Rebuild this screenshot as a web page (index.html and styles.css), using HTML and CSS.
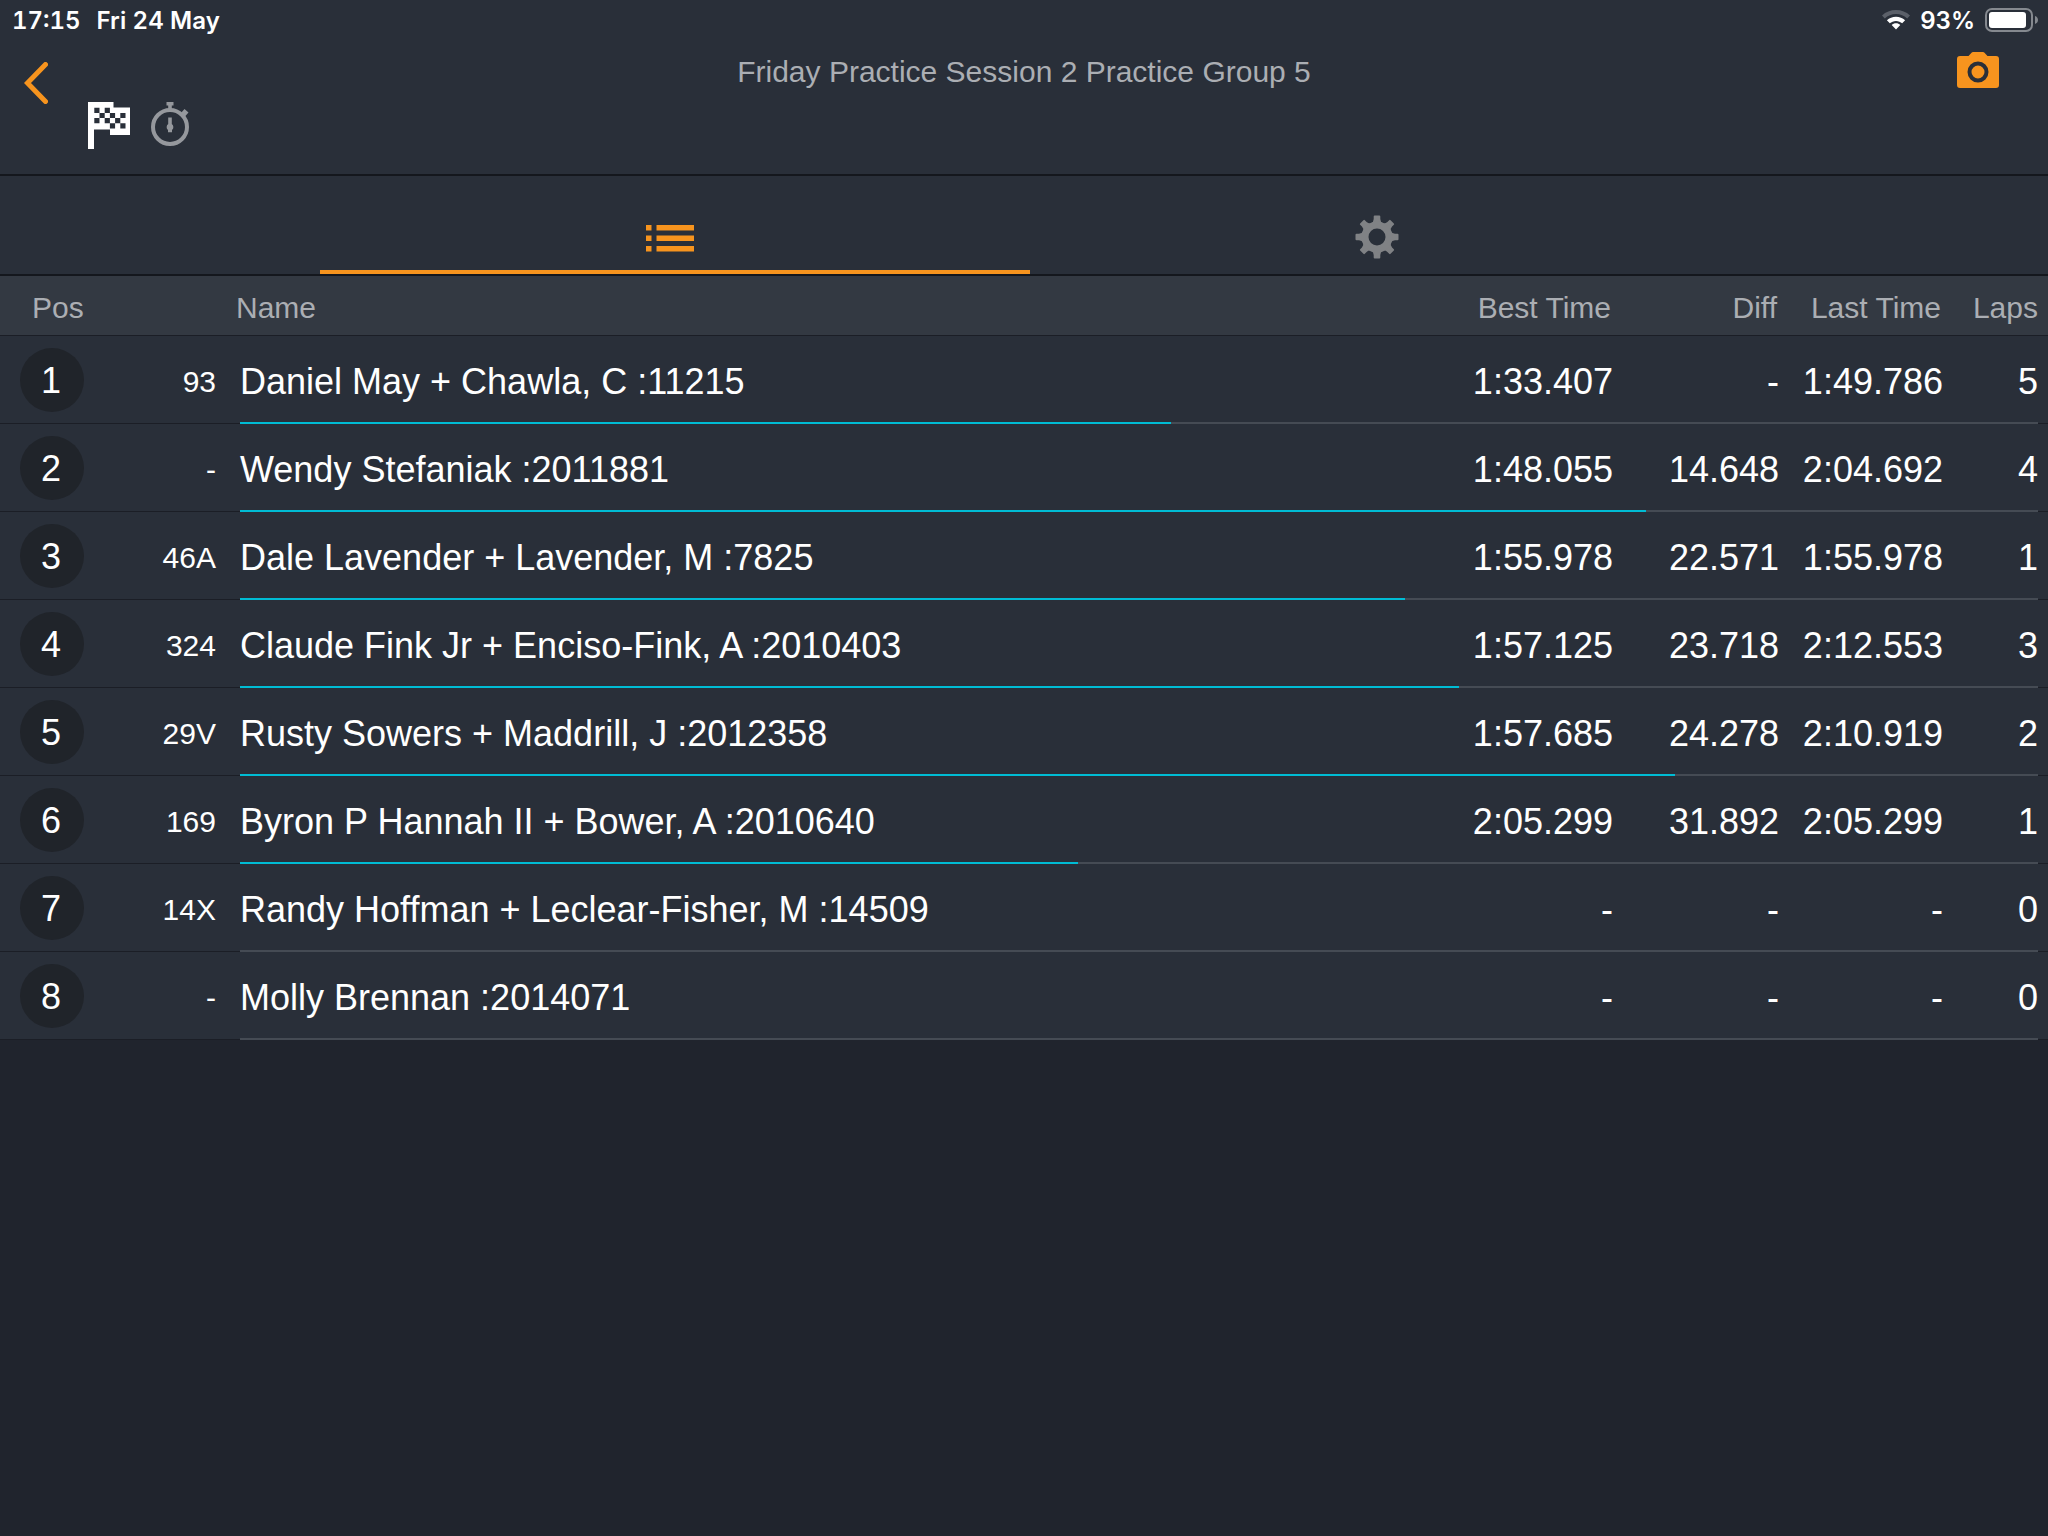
FILE: index.html
```html
<!DOCTYPE html>
<html lang="en">
<head>
<meta charset="UTF-8">
<meta name="viewport" content="width=device-width, initial-scale=1.0">
<title>Friday Practice Session 2 Practice Group 5</title>
<link rel="stylesheet" href="styles.css">
</head>
<body>

<div class="status-bar">
  <div class="status-left">
    <span>17:15</span>
    <span>Fri 24 May</span>
  </div>
  <div class="status-right">
    <svg class="wifi" viewBox="0 0 28 20" width="28" height="20">
      <path d="M14 0C8.600 0 3.700 2 0 5.400l2.800 3C5.800 5.700 9.700 4.100 14 4.100s8.200 1.600 11.200 4.300l2.800-3C24.300 2 19.400 0 14 0z" fill="#5b6069"/>
      <path d="M14 6.800c-3.500 0-6.700 1.300-9.100 3.500l2.900 3c1.600-1.500 3.800-2.400 6.200-2.400s4.600.9 6.200 2.400l2.900-3c-2.400-2.200-5.600-3.500-9.100-3.500z" fill="#fff"/>
      <path d="M14 13.200c-1.700 0-3.200.6-4.300 1.700L14 19.600l4.300-4.700c-1.100-1.100-2.600-1.700-4.300-1.700z" fill="#fff"/>
    </svg>
    <span>93%</span>
    <svg class="battery" viewBox="0 0 54 24" width="54" height="24">
      <rect x="1" y="1" width="46" height="22" rx="6" fill="none" stroke="#85898f" stroke-width="2"/>
      <rect x="4" y="4" width="37" height="16" rx="3" fill="#fff"/>
      <path d="M50 8c1.800.6 3 2.200 3 4s-1.200 3.400-3 4z" fill="#85898f"/>
    </svg>
  </div>
</div>

<header>
  <button class="back" aria-label="Back">
    <svg viewBox="0 0 24 42" width="24" height="42">
      <path d="M21.500 2.500L3.500 21l18 18.500" fill="none" stroke="#f7941e" stroke-width="5" stroke-linecap="round" stroke-linejoin="miter"/>
    </svg>
  </button>
  <div class="flags">
    <svg viewBox="0 0 42 47" width="42" height="47">
      <path d="M0 0h25.500v5.500H42V33H22v-5.500H6V47H0z" fill="#fff"/>
      <g fill="#292f39">
        <path d="M6.300 5.700h5.200v5.200H6.300zM16.700 5.700h5.200v5.200h-5.200zM11.500 10.900h5.200v5.200h-5.200zM21.900 10.900h5.200v5.200h-5.200zM32.300 10.900h5.200v5.200h-5.200zM6.300 16.100h5.200v5.200H6.300zM16.700 16.100h5.200v5.200h-5.200zM27.100 16.100h5.200v5.200h-5.200zM21.900 21.300h5.200v5.200h-5.200zM32.300 21.300h5.200v5.200h-5.200z"/>
      </g>
    </svg>
    <svg viewBox="0 0 38 44" width="38" height="44">
      <circle cx="19" cy="25" r="17" fill="none" stroke="#95989d" stroke-width="4"/>
      <path d="M15.500 0h7v3.500h-1.700V8h-3.600V3.500h-1.700zM29.500 11.500l4-4.500 4 3.400-3.800 4.400z" fill="#95989d"/>
      <path d="M17.200 15.500h3.600v6.600a3.800 3.800 0 0 1 .2 6v2.100h-4v-2.100a3.800 3.800 0 0 1 .2-6z" fill="#95989d"/>
    </svg>
  </div>
  <h1>Friday Practice Session 2 Practice Group 5</h1>
  <button class="camera" aria-label="Take picture">
    <svg viewBox="0 0 42 36" width="42" height="36">
      <path d="M3 4h8.500l3-3.200Q15.200 0 16 0h10q.8 0 1.500.8l3 3.200H39q3 0 3 3v26q0 3-3 3H3q-3 0-3-3V7q0-3 3-3z" fill="#f7941e"/>
      <circle cx="21" cy="20" r="8.500" fill="none" stroke="#292f39" stroke-width="4"/>
    </svg>
  </button>
</header>

<nav class="tabs">
  <button class="tab active" aria-label="Results">
    <svg viewBox="0 0 58 28" width="58" height="28">
      <path d="M0 0h5.500v5.500H0zM10.500 0H48v5.500H10.500zM0 10.500h5.500V16H0zM10.500 10.500H48V16H10.500zM0 21h5.500v5.500H0zM10.500 21H48v5.500H10.500z" fill="#f7941e"/>
    </svg>
  </button>
  <button class="tab" aria-label="Settings">
    <svg viewBox="-22 -22 48 44" width="48" height="44">
      <defs>
        <path id="tooth" d="M-5.500-14Q-3.500-15-3.300-18v-2.500q0-1 1-1h4.600q1 0 1 1v2.500q.2 3 2.200 4z"/>
      </defs>
      <g fill="#808285">
        <use href="#tooth"/>
        <use href="#tooth" transform="rotate(45)"/>
        <use href="#tooth" transform="rotate(90)"/>
        <use href="#tooth" transform="rotate(135)"/>
        <use href="#tooth" transform="rotate(180)"/>
        <use href="#tooth" transform="rotate(225)"/>
        <use href="#tooth" transform="rotate(270)"/>
        <use href="#tooth" transform="rotate(315)"/>
      </g>
      <circle r="12" fill="none" stroke="#808285" stroke-width="7"/>
    </svg>
  </button>
</nav>

<table class="results">
  <thead>
    <tr>
      <th class="pos">Pos</th>
      <th class="car"></th>
      <th class="name">Name</th>
      <th class="best">Best Time</th>
      <th class="diff">Diff</th>
      <th class="last">Last Time</th>
      <th class="laps">Laps</th>
    </tr>
  </thead>
  <tbody>
    <tr>
      <td class="pos"><span>1</span></td>
      <td class="car">93</td>
      <td class="name">Daniel May + Chawla, C :11215<div class="track"><div class="bar" style="width: 51.8%"></div></div></td>
      <td>1:33.407</td>
      <td>-</td>
      <td>1:49.786</td>
      <td class="laps">5</td>
    </tr>
    <tr>
      <td class="pos"><span>2</span></td>
      <td class="car">-</td>
      <td class="name">Wendy Stefaniak :2011881<div class="track"><div class="bar" style="width: 78.2%"></div></div></td>
      <td>1:48.055</td>
      <td>14.648</td>
      <td>2:04.692</td>
      <td class="laps">4</td>
    </tr>
    <tr>
      <td class="pos"><span>3</span></td>
      <td class="car">46A</td>
      <td class="name">Dale Lavender + Lavender, M :7825<div class="track"><div class="bar" style="width: 64.8%"></div></div></td>
      <td>1:55.978</td>
      <td>22.571</td>
      <td>1:55.978</td>
      <td class="laps">1</td>
    </tr>
    <tr>
      <td class="pos"><span>4</span></td>
      <td class="car">324</td>
      <td class="name">Claude Fink Jr + Enciso-Fink, A :2010403<div class="track"><div class="bar" style="width: 67.8%"></div></div></td>
      <td>1:57.125</td>
      <td>23.718</td>
      <td>2:12.553</td>
      <td class="laps">3</td>
    </tr>
    <tr>
      <td class="pos"><span>5</span></td>
      <td class="car">29V</td>
      <td class="name">Rusty Sowers + Maddrill, J :2012358<div class="track"><div class="bar" style="width: 79.8%"></div></div></td>
      <td>1:57.685</td>
      <td>24.278</td>
      <td>2:10.919</td>
      <td class="laps">2</td>
    </tr>
    <tr>
      <td class="pos"><span>6</span></td>
      <td class="car">169</td>
      <td class="name">Byron P Hannah II + Bower, A :2010640<div class="track"><div class="bar" style="width: 46.6%"></div></div></td>
      <td>2:05.299</td>
      <td>31.892</td>
      <td>2:05.299</td>
      <td class="laps">1</td>
    </tr>
    <tr>
      <td class="pos"><span>7</span></td>
      <td class="car">14X</td>
      <td class="name">Randy Hoffman + Leclear-Fisher, M :14509<div class="track"></div></td>
      <td>-</td>
      <td>-</td>
      <td>-</td>
      <td class="laps">0</td>
    </tr>
    <tr>
      <td class="pos"><span>8</span></td>
      <td class="car">-</td>
      <td class="name">Molly Brennan :2014071<div class="track"></div></td>
      <td>-</td>
      <td>-</td>
      <td>-</td>
      <td class="laps">0</td>
    </tr>
  </tbody>
</table>

</body>
</html>
```
FILE: styles.css
```css
* {
  box-sizing: border-box;
}
body {
  margin: 0;
  background-color: #20242d;
  color: #fff;
  font-family: "Helvetica Neue", "Liberation Sans", Arial, sans-serif;
}
button {
  border: 0;
  padding: 0;
  background: none;
  cursor: pointer;
}
svg {
  display: block;
}

/* Status bar */
.status-bar {
  display: flex;
  justify-content: space-between;
  align-items: center;
  height: 40px;
  padding: 0 9px 0 12px;
  background-color: #292f39;
  font-family: Inter, sans-serif;
  font-size: 24px;
  font-weight: 600;
}
.status-left {
  display: flex;
  gap: 16px;
  font-variant-numeric: tabular-nums;
}
.status-right {
  display: flex;
  align-items: center;
  gap: 10px;
}

/* Header */
header {
  display: grid;
  grid-template-columns: 88px 1fr auto 1fr 88px;
  align-items: start;
  height: 136px;
  border-bottom: 2px solid #14171d;
  background-color: #292f39;
}
.back {
  justify-self: start;
  margin: 22px 0 0 24px;
}
.flags {
  display: flex;
  gap: 21px;
  padding-top: 62px;
}
h1 {
  margin: 12px 0 0;
  color: #abaeb3;
  font-size: 30px;
  font-weight: normal;
  line-height: 40px;
}
.camera {
  grid-column: 5;
  justify-self: end;
  margin: 12px 49px 0 0;
}

/* Tabs */
.tabs {
  display: grid;
  grid-template-columns: 710fr 698fr;
  height: 100px;
  padding: 0 320px;
  border-bottom: 2px solid #14171d;
  background-color: #292f39;
}
.tab {
  display: flex;
  justify-content: center;
  align-items: center;
  padding-top: 28px;
  border-bottom: 4px solid transparent;
}
.tab.active {
  padding-top: 32px;
  border-bottom-color: #f7941e;
}

/* Results */
.results {
  width: 100%;
  table-layout: fixed;
  border-spacing: 0;
}
.results tr {
  position: relative;
}
.results th {
  height: 60px;
  padding: 4px 2px 0 0;
  border-bottom: 1px solid #1b1e26;
  background-color: #333942;
  color: #abaeb3;
  font-size: 30px;
  font-weight: normal;
  text-align: right;
}
.results td {
  height: 88px;
  padding: 4px 0 0;
  border-bottom: 1px solid #1b1e26;
  background-color: #292f39;
  font-size: 36px;
  text-align: right;
}
th.pos {
  width: 100px;
}
th.car {
  width: 116px;
}
th.best {
  width: 160px;
}
th.diff {
  width: 166px;
}
th.last {
  width: 164px;
}
th.laps {
  width: 105px;
}
.results th.pos {
  padding-left: 32px;
  text-align: left;
}
.results td.pos {
  padding: 0 0 0 20px;
}
.pos span {
  display: block;
  width: 64px;
  height: 64px;
  padding-right: 2px;
  border-radius: 50%;
  background-color: #20242a;
  line-height: 66px;
  text-align: center;
}
.results td.car {
  font-size: 30px;
}
.results th.name {
  padding-left: 20px;
  text-align: left;
}
.results td.name {
  padding-left: 24px;
  text-align: left;
}
.results .laps {
  padding-right: 10px;
}

/* Lap progress along the bottom of the row */
.track {
  position: absolute;
  left: 240px;
  right: 10px;
  bottom: 0;
  height: 2px;
  background-color: #454b54;
}
.bar {
  height: 2px;
  background-color: #00bcd4;
}
```
